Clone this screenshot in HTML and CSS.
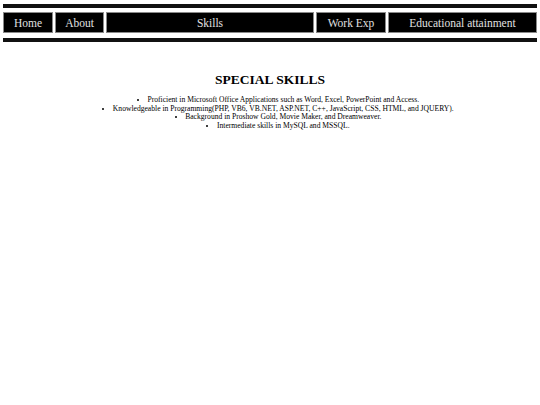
FILE: index.html
```html
<!DOCTYPE html>
<html>
<head>
<meta charset="utf-8">
<link rel="stylesheet" href="styles.css">
</head>
<body>
<div class="nav">
  <a class="cell home">Home</a>
  <a class="cell about">About</a>
  <a class="cell skills">Skills</a>
  <a class="cell work">Work Exp</a>
  <a class="cell edu">Educational attainment</a>
</div>
<h1 class="title">SPECIAL SKILLS</h1>
<ul class="skills-list">
  <li>Proficient in Microsoft Office Applications such as Word, Excel, PowerPoint and Access.</li>
  <li>Knowledgeable in Programming(PHP, VB6, VB.NET, ASP.NET, C++, JavaScript, CSS, HTML, and JQUERY).</li>
  <li>Background in Proshow Gold, Movie Maker, and Dreamweaver.</li>
  <li>Intermediate skills in MySQL and MSSQL.</li>
</ul>
</body>
</html>
```
FILE: styles.css
```css
html, body {
  margin: 0;
  padding: 0;
  background: #fff;
  font-family: "Liberation Serif", "Times New Roman", serif;
}
.nav {
  margin: 4px 3px 0 3px;
  border-top: 4px solid #111;
  border-bottom: 4px solid #111;
  padding: 4px 0 5px 0;
  display: flex;
  gap: 2px;
}
.cell {
  box-sizing: border-box;
  height: 21px;
  background: #000;
  color: #e0e0e0;
  border: 1px solid #8a8a8a;
  font-family: "Liberation Serif", "Times New Roman", serif;
  font-size: 11.5px;
  display: flex;
  align-items: center;
  justify-content: center;
}
.home { width: 50px; }
.about { width: 49px; }
.skills { width: 208px; }
.work { width: 70px; }
.edu { flex: 1; }
.title {
  margin: 29px 0 0 0;
  text-align: center;
  font-size: 13.5px;
  font-weight: bold;
  line-height: 18px;
}
.skills-list {
  margin: 7px 0 0 0;
  padding: 0 0 0 16px;
  list-style-position: inside;
  text-align: center;
  font-size: 7.6px;
  line-height: 8.7px;
}
```
